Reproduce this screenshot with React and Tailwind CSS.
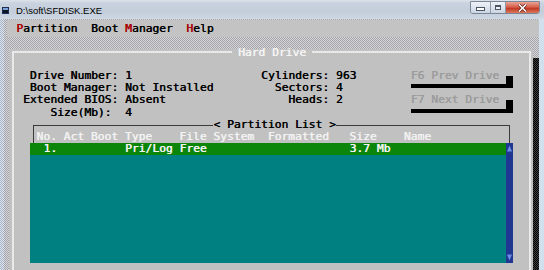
import React from "react";

function Line({ segs, start = 1, className = "" }) {
  let cur = start;
  const out = [];
  segs.forEach(([col, content, cls, len], i) => {
    if (col > cur) out.push(" ".repeat(col - cur));
    out.push(
      <span key={i} className={cls}>
        {content}
      </span>
    );
    cur = col + (len ?? content.length);
  });
  return (
    <div className={"h-[12.05px] leading-[12.05px] whitespace-pre " + className}>{out}</div>
  );
}

const blockLow = (
  <span className="inline-block align-top w-[6.8px] h-[12.05px] bg-[linear-gradient(to_bottom,transparent_5.6px,#000_5.6px)]" />
);
const underline = (
  <span className="inline-block align-top w-[95.2px] h-[12.05px] bg-[linear-gradient(to_bottom,transparent_1.6px,#000_1.6px,#000_6.1px,transparent_6.1px)]" />
);
const blockHigh = (
  <span className="inline-block align-top w-[6.8px] h-[12.05px] bg-[linear-gradient(to_bottom,#000_6.1px,transparent_6.1px)]" />
);

function TitleBar() {
  return (
    <div className="h-[19px] flex items-start bg-[linear-gradient(to_bottom,#dde2e8_0px,#c9d3df_3px,#c3cedb_12px,#cfd8e3_19px)]">
      <div className="mt-[7px] ml-[2px] w-[7px] h-[7px] flex flex-col border border-[#1b2d55] bg-[#0c1424]">
        <div className="h-[2px] bg-[#7ea3d8]" />
      </div>
      <div className="ml-[7px] mt-[5px] text-[9.5px] leading-[12px] text-black font-['Liberation_Sans',Arial,sans-serif]">
        {"D:\\soft\\SFDISK.EXE"}
      </div>
      <div className="flex-1" />
      <div className="mt-[1px] h-[13px] flex border border-[#7b8797] rounded-b-[3px] overflow-hidden">
        <div className="w-[20px] bg-[linear-gradient(to_bottom,#eef2f7,#cbd5e2)] flex items-end justify-center pb-[2px] border-r border-[#8d99a8]">
          <div className="w-[7px] h-[2px] bg-white border border-[#4a5565] box-content" />
        </div>
        <div className="w-[15px] bg-[linear-gradient(to_bottom,#eef2f7,#cbd5e2)] flex items-center justify-center border-r border-[#8d99a8]">
          <div className="w-[6px] h-[5px] border border-[#4a5565] bg-white/60 border-t-2" />
        </div>
        <div className="w-[33px] bg-[linear-gradient(to_bottom,#e9a596,#d6604c_45%,#c23a26_60%,#dc7a5c)] flex items-center justify-center">
          <svg width="9" height="8" viewBox="0 0 9 8">
            <path d="M1 0.5 L8 7.5 M8 0.5 L1 7.5" stroke="#5a1a10" strokeWidth="3" />
            <path d="M1 0.5 L8 7.5 M8 0.5 L1 7.5" stroke="#ffffff" strokeWidth="1.6" />
          </svg>
        </div>
      </div>
      <div className="w-[4px]" />
    </div>
  );
}

export default function App() {
  return (
    <div className="w-[544px] h-[270px] overflow-hidden flex flex-col bg-[#cfdbe8] font-['DejaVu_Sans_Mono',monospace] text-[11.3px] text-black">
      <TitleBar />
      <div className="flex flex-1 min-h-0 [text-shadow:0.45px_0_0_currentColor]">
        <div className="w-[4px] bg-[image:repeating-conic-gradient(#a7b3c7_0%_25%,#dde4ee_0%_50%)] bg-[length:2px_2px]" />
        <div className="w-[535px] flex flex-col bg-[image:repeating-conic-gradient(#a4a4aa_0%_25%,#d6d6da_0%_50%)] bg-[length:2px_2px]">
          {/* menu bar */}
          <div className="mt-[1px] ml-[3px] h-[17px] bg-[#c3c3c3] pt-[2.5px] pl-[2.4px]">
            <Line
              start={0}
              segs={[
                [1, "P", "text-[#a80000]"],
                [2, "artition"],
                [12, "Boot "],
                [17, "M", "text-[#a80000]"],
                [18, "anager"],
                [26, "H", "text-[#a80000]"],
                [27, "elp"],
              ]}
            />
          </div>
          <div className="h-[12px]" />
          <div className="flex flex-1 min-h-0">
            {/* Hard Drive panel */}
            <div className="ml-[5.4px] w-[523.6px] bg-[#c1c1c1] flex flex-col">
              <div className="flex h-[3.5px] pt-[1.5px] pl-[2.8px] pr-[2.4px]">
                <div className="h-[2px] w-[219.8px] bg-[#e9e9e9]" />
                <div className="h-[2px] w-[80px] flex justify-center">
                  <span className="-mt-[4px] h-[12px] leading-[12px] text-[#f4f4f4] whitespace-pre">Hard Drive</span>
                </div>
                <div className="h-[2px] flex-1 bg-[#e9e9e9]" />
              </div>
              <div className="flex flex-1 min-h-0">
                <div className="ml-[2.8px] w-[2px] bg-[#e9e9e9]" />
                <div className="flex-1 flex flex-col pt-[17.9px] pl-[2px]">
                  <Line
                    segs={[
                      [3, "Drive Number:"],
                      [17, "1"],
                      [37, "Cylinders:"],
                      [48, "963"],
                      [59, "F6 Prev Drive", "text-[#9c9c9c]"],
                      [73, blockLow, "", 1],
                    ]}
                  />
                  <Line
                    segs={[
                      [3, "Boot Manager:"],
                      [17, "Not Installed"],
                      [39, "Sectors:"],
                      [48, "4"],
                      [59, underline, "", 14],
                      [73, blockHigh, "", 1],
                    ]}
                  />
                  <Line
                    segs={[
                      [2, "Extended BIOS:"],
                      [17, "Absent"],
                      [41, "Heads:"],
                      [48, "2"],
                      [59, "F7 Next Drive", "text-[#9c9c9c]"],
                      [73, blockLow, "", 1],
                    ]}
                  />
                  <Line
                    segs={[
                      [6, "Size(Mb):"],
                      [17, "4"],
                      [59, underline, "", 14],
                      [73, blockHigh, "", 1],
                    ]}
                  />
                  {/* partition list box */}
                  <div className="mt-[6px] ml-[16.8px] w-[476.7px] h-[18.1px] border-l border-r border-[#3a3a3a] flex flex-col">
                    <div className="flex items-center h-[1px]">
                      <div className="h-[1px] w-[179.4px] bg-[#3a3a3a]" />
                      <span className="h-[12px] leading-[12px] whitespace-pre">{"< Partition List >"}</span>
                      <div className="h-[1px] flex-1 bg-[#3a3a3a]" />
                    </div>
                    <div className="mt-[5px] pl-[2.4px]">
                      <Line
                        start={4}
                        className="text-[#f2f2f2]"
                        segs={[
                          [4, "No."],
                          [8, "Act"],
                          [12, "Boot"],
                          [17, "Type"],
                          [25, "File System"],
                          [38, "Formatted"],
                          [50, "Size"],
                          [58, "Name"],
                        ]}
                      />
                    </div>
                  </div>
                  <div className="ml-[13.6px] w-[482.8px] h-[120.5px] flex">
                    <div className="flex-1 flex flex-col bg-[#008080]">
                      <Line
                        start={3}
                        className="bg-[#0b860b] text-[#f4f4f4]"
                        segs={[
                          [5, "1."],
                          [17, "Pri/Log"],
                          [25, "Free"],
                          [50, "3.7 Mb"],
                        ]}
                      />
                    </div>
                    <div className="w-[6.8px] bg-[#1f3792] flex flex-col justify-between items-center py-[2px]">
                      <svg width="5" height="7" viewBox="0 0 5 7">
                        <path d="M2.5 0.5 L5 6.5 L0 6.5 Z" fill="#6d8ee2" />
                      </svg>
                      <svg width="5" height="7" viewBox="0 0 5 7">
                        <path d="M0 0.5 L5 0.5 L2.5 6.5 Z" fill="#6d8ee2" />
                      </svg>
                    </div>
                  </div>
                </div>
                <div className="w-[2px] mr-[2.4px] bg-[#e9e9e9]" />
              </div>
            </div>
            {/* shadow */}
            <div className="w-[6px] mt-[9px] bg-[image:repeating-conic-gradient(#000_0%_25%,#3c3c3c_0%_50%)] bg-[length:2px_2px]" />
          </div>
        </div>
        <div className="flex-1 bg-[#d2dfed]" />
      </div>
    </div>
  );
}
